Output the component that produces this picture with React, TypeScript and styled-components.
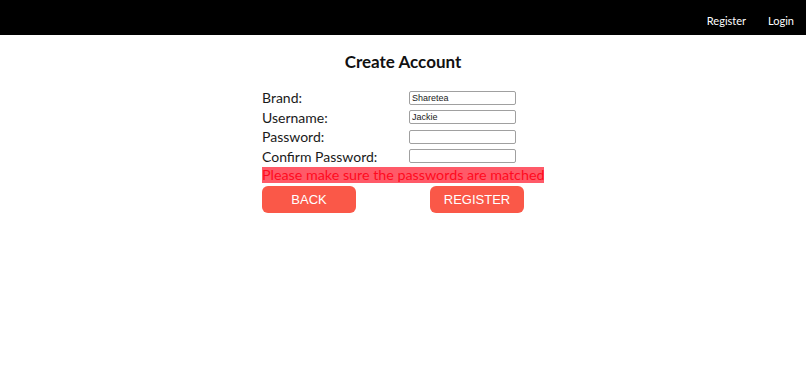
import React from "react";
import styled, { createGlobalStyle } from "styled-components";

const GlobalStyle = createGlobalStyle`
  body {
    margin: 0;
    background: #ffffff;
    font-family: Lato, "Noto Sans", sans-serif;
  }
`;

const StyledNav = styled.nav`
  height: 35px;
  background-color: #000000;
  display: flex;
  justify-content: flex-end;
  align-items: center;
  padding: 0 12px 0 0;
  gap: 22px;
`;

const StyledNavLink = styled.a`
  color: #ffffff;
  font-size: 11px;
  text-decoration: none;
  padding-top: 6px;
`;

const StyledPage = styled.main`
  display: flex;
  flex-direction: column;
  align-items: center;
`;

const StyledTitle = styled.h2`
  margin: 16px 0 15px;
  font-size: 17px;
  font-weight: 700;
  color: #111111;
  line-height: 22px;
`;

const StyledForm = styled.form`
  width: 282px;
  display: flex;
  flex-direction: column;
`;

const StyledRow = styled.div`
  display: grid;
  grid-template-columns: 147px 107px;
  align-items: center;
  height: 19.5px;
`;

const StyledLabel = styled.label`
  font-size: 14px;
  color: #1a1a1a;
  line-height: 19px;
`;

const StyledInput = styled.input`
  box-sizing: border-box;
  width: 107px;
  height: 14px;
  padding: 0 2px;
  border: 1px solid #a0a0a0;
  border-radius: 2px;
  font-family: "Liberation Sans", Arial, sans-serif;
  font-size: 9px;
  color: #222222;
  outline: none;
`;

const StyledError = styled.div`
  margin-top: 1px;
  height: 16px;
  line-height: 16px;
  background-color: #ff5a68;
  color: #ff0a20;
  font-size: 14.3px;
  white-space: nowrap;
`;

const StyledButtons = styled.div`
  display: flex;
  gap: 74px;
  margin-top: 3px;
`;

const StyledButton = styled.button`
  width: 94px;
  height: 27px;
  border: none;
  border-radius: 6px;
  background-color: #fa5848;
  color: #ffffff;
  font-family: "Liberation Sans", Arial, sans-serif;
  font-size: 13px;
  cursor: pointer;
`;

interface FieldProps {
  label: string;
  value?: string;
  type?: string;
}

const Field: React.FC<FieldProps> = ({ label, value, type }) => (
  <StyledRow>
    <StyledLabel>{label}</StyledLabel>
    <StyledInput type={type || "text"} defaultValue={value} />
  </StyledRow>
);

const App: React.FC = () => {
  return (
    <>
      <GlobalStyle />
      <StyledNav>
        <StyledNavLink href="#">Register</StyledNavLink>
        <StyledNavLink href="#">Login</StyledNavLink>
      </StyledNav>
      <StyledPage>
        <StyledTitle>Create Account</StyledTitle>
        <StyledForm onSubmit={e => e.preventDefault()}>
          <Field label="Brand:" value="Sharetea" />
          <Field label="Username:" value="Jackie" />
          <Field label="Password:" type="password" />
          <Field label="Confirm Password:" type="password" />
          <StyledError>Please make sure the passwords are matched</StyledError>
          <StyledButtons>
            <StyledButton type="button">BACK</StyledButton>
            <StyledButton type="submit">REGISTER</StyledButton>
          </StyledButtons>
        </StyledForm>
      </StyledPage>
    </>
  );
};

export default App;
